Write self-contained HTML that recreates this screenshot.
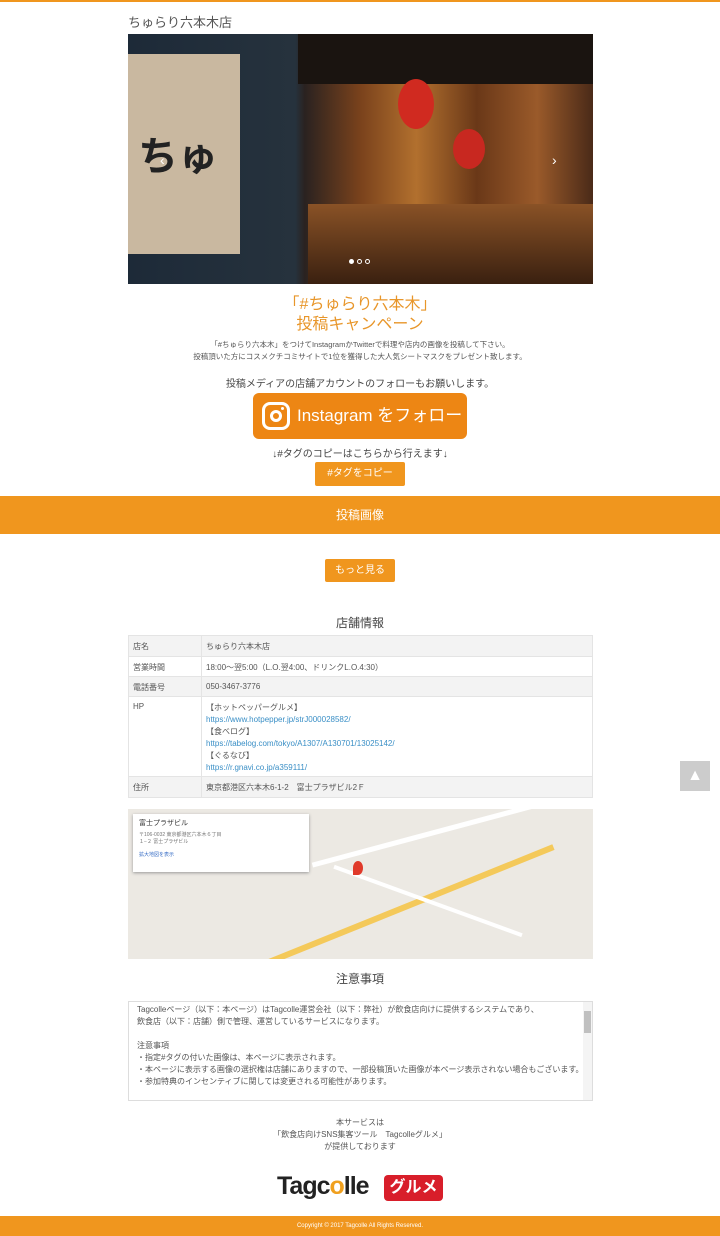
<!DOCTYPE html>
<html><head><meta charset="utf-8">
<style>
*{margin:0;padding:0;box-sizing:border-box}
body{width:720px;height:1236px;background:#fff;font-family:"Liberation Sans","Noto Sans CJK JP",sans-serif;color:#555;position:relative;overflow:hidden}
.abs{position:absolute}
.c{text-align:center;left:0;width:720px}
table{border-collapse:collapse;font-size:8px;width:465px}
td{border:1px solid #e4e4e4;padding:0 4px;vertical-align:top;padding-top:5px;color:#555}
tr.g td{background:#f3f3f3}
a{color:#3a8fc6;text-decoration:none}
</style></head><body>
<div class="abs" style="left:0;top:0;width:720px;height:2px;background:#f0961e"></div>
<div class="abs" style="left:128px;top:12px;font-size:13px;color:#555">ちゅらり六本木店</div>
<div class="abs" style="left:128px;top:34px;width:465px;height:250px;background:linear-gradient(90deg,#1d2a38 0%,#26323d 36%,#2a2220 38%,#7a421c 50%,#b2702e 62%,#6a3818 75%,#9a5a2a 88%,#4a2a18 100%);overflow:hidden">
 <div class="abs" style="left:0;top:20px;width:112px;height:200px;background:#c9b8a0"></div>
 <div class="abs" style="left:10px;top:90px;font-size:40px;color:#222;font-weight:bold">ちゅ</div>
 <div class="abs" style="left:170px;top:0;width:300px;height:50px;background:#1a1410"></div>
 <div class="abs" style="left:270px;top:45px;width:36px;height:50px;border-radius:50%;background:#d02a20"></div>
 <div class="abs" style="left:325px;top:95px;width:32px;height:40px;border-radius:50%;background:#c82820"></div>
 <div class="abs" style="left:180px;top:170px;width:300px;height:80px;background:linear-gradient(180deg,#8a5226,#3a2010)"></div>
 <div class="abs" style="left:32px;top:118px;color:#fff;font-size:14px">‹</div>
 <div class="abs" style="left:424px;top:118px;color:#fff;font-size:14px">›</div>
 <div class="abs" style="left:221px;top:225px;width:5px;height:5px;border-radius:50%;background:#fff"></div>
 <div class="abs" style="left:229px;top:225px;width:5px;height:5px;border-radius:50%;border:1px solid #fff"></div>
 <div class="abs" style="left:237px;top:225px;width:5px;height:5px;border-radius:50%;border:1px solid #fff"></div>
</div>
<div class="abs c" style="top:295px;font-size:16px;line-height:20px;color:#e8962a">「#ちゅらり六本木」<br>投稿キャンペーン</div>
<div class="abs c" style="top:339px;font-size:7.5px;line-height:12px;color:#555">「#ちゅらり六本木」をつけてInstagramかTwitterで料理や店内の画像を投稿して下さい。<br>投稿頂いた方にコスメクチコミサイトで1位を獲得した大人気シートマスクをプレゼント致します。</div>
<div class="abs c" style="top:375px;font-size:10px;color:#444">投稿メディアの店舗アカウントのフォローもお願いします。</div>
<div class="abs" style="left:253px;top:393px;width:214px;height:46px;background:#ed8614;border-radius:6px;color:#fff;font-size:17px;line-height:46px">
 <div class="abs" style="left:9px;top:9px;width:28px;height:28px;border:3px solid #fff;border-radius:8px"><div class="abs" style="left:5px;top:5px;width:12px;height:12px;border:3px solid #fff;border-radius:50%"></div><div class="abs" style="left:16px;top:2px;width:3px;height:3px;background:#fff;border-radius:50%"></div></div>
 <span class="abs" style="left:44px;top:0">Instagram をフォロー</span>
</div>
<div class="abs c" style="top:445px;font-size:10px;color:#444">↓#タグのコピーはこちらから行えます↓</div>
<div class="abs" style="left:315px;top:462px;width:90px;height:24px;background:#f0961e;border-radius:2px;color:#fff;font-size:10px;line-height:24px;text-align:center">#タグをコピー</div>
<div class="abs" style="left:0;top:496px;width:720px;height:38px;background:#f0961e;color:#fff;font-size:12px;line-height:38px;text-align:center">投稿画像</div>
<div class="abs" style="left:325px;top:559px;width:70px;height:23px;background:#f0961e;border-radius:2px;color:#fff;font-size:10px;line-height:23px;text-align:center">もっと見る</div>
<div class="abs c" style="top:614px;font-size:12px;color:#444">店舗情報</div>
<table class="abs" style="left:128px;top:635px">
<tr class="g" style="height:21px"><td style="width:73px">店名</td><td>ちゅらり六本木店</td></tr>
<tr style="height:20px"><td>営業時間</td><td>18:00〜翌5:00（L.O.翌4:00、ドリンクL.O.4:30）</td></tr>
<tr class="g" style="height:20px"><td>電話番号</td><td>050-3467-3776</td></tr>
<tr style="height:80px"><td>HP</td><td style="line-height:12px">【ホットペッパーグルメ】<br><a>https://www.hotpepper.jp/strJ000028582/</a><br>【食べログ】<br><a>https://tabelog.com/tokyo/A1307/A130701/13025142/</a><br>【ぐるなび】<br><a>https://r.gnavi.co.jp/a359111/</a></td></tr>
<tr class="g" style="height:21px"><td>住所</td><td>東京都港区六本木6-1-2　富士プラザビル2Ｆ</td></tr>
</table>
<div class="abs" style="left:128px;top:809px;width:465px;height:150px;background:#ece9e3;overflow:hidden">
 <div class="abs" style="left:40px;top:110px;width:400px;height:6px;background:#f4c95a;transform:rotate(-22deg)"></div>
 <div class="abs" style="left:180px;top:20px;width:260px;height:5px;background:#fff;transform:rotate(-15deg)"></div>
 <div class="abs" style="left:200px;top:90px;width:200px;height:4px;background:#fff;transform:rotate(20deg)"></div>
 <div class="abs" style="left:5px;top:5px;width:176px;height:58px;background:#fff;box-shadow:0 1px 3px #999;font-size:7px;color:#333;padding:4px 6px">富士プラザビル<div style="font-size:5px;color:#777;margin-top:3px">〒106-0032 東京都港区六本木６丁目<br>１−２ 富士プラザビル</div><div style="font-size:5px;color:#3a6fc6;margin-top:6px">拡大地図を表示</div></div>
 <div class="abs" style="left:225px;top:52px;width:10px;height:14px;background:#e03a2a;border-radius:50% 50% 50% 0"></div>
</div>
<div class="abs c" style="top:970px;font-size:12px;color:#444">注意事項</div>
<div class="abs" style="left:128px;top:1001px;width:465px;height:100px;border:1px solid #ddd;font-size:8px;line-height:12px;padding:2px 8px;color:#555;overflow:hidden">Tagcolleページ（以下：本ページ）はTagcolle運営会社（以下：弊社）が飲食店向けに提供するシステムであり、<br>飲食店（以下：店舗）側で管理、運営しているサービスになります。<br><br>注意事項<br>・指定#タグの付いた画像は、本ページに表示されます。<br>・本ページに表示する画像の選択権は店舗にありますので、一部投稿頂いた画像が本ページ表示されない場合もございます。<br>・参加特典のインセンティブに関しては変更される可能性があります。
 <div class="abs" style="right:0;top:0;width:9px;height:98px;background:#f4f4f4"><div style="margin:9px 1px;height:22px;background:#c0c0c0"></div></div></div>
<div class="abs c" style="top:1117px;font-size:8px;line-height:12px;color:#555">本サービスは<br>「飲食店向けSNS集客ツール　Tagcolleグルメ」<br>が提供しております</div>
<div class="abs" style="left:277px;top:1172px;font-size:25px;font-weight:bold;color:#222;letter-spacing:-1px">Tagc<span style="color:#f0a01e">o</span>lle</div>
<div class="abs" style="left:384px;top:1175px;width:59px;height:26px;background:#d81e2a;border-radius:4px;color:#fff;font-size:16px;font-weight:bold;text-align:center;line-height:26px">グルメ</div>
<div class="abs" style="left:0;top:1216px;width:720px;height:20px;background:#f0961e;color:#fff;font-size:6px;line-height:20px;text-align:center">Copyright © 2017 Tagcolle All Rights Reserved.</div>
<div class="abs" style="left:680px;top:761px;width:30px;height:30px;background:#ccc;color:#fff;font-size:16px;line-height:30px;text-align:center">▲</div>
</body></html>
